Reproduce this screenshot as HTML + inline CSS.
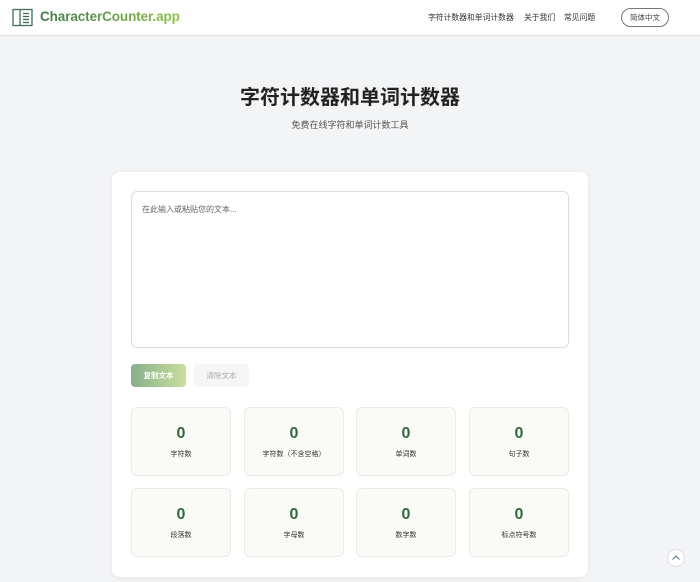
<!DOCTYPE html>
<html><head><meta charset="utf-8"><style>
*{box-sizing:border-box;margin:0;padding:0}
body{width:700px;height:582px;overflow:hidden;background:#f3f4f6;font-family:"Liberation Sans","Noto Sans CJK SC",sans-serif;color:#333;position:relative}
.hdr{position:absolute;left:0;top:0;width:700px;height:36px;background:#fff;border-bottom:1px solid #e2e4e7}
.logo{position:absolute;left:40px;top:9px;font-size:13.5px;font-weight:bold;background:linear-gradient(90deg,#3e7a4c,#8cc63f);-webkit-background-clip:text;background-clip:text;color:transparent;letter-spacing:-0.1px}
.nav{position:absolute;top:12px;font-size:7.8px;color:#333}
.lang{position:absolute;left:621px;top:8px;width:48px;height:19px;border:1px solid #777;border-radius:10px;font-size:7.5px;text-align:center;line-height:17px;color:#444}
h1{position:absolute;left:0;width:700px;top:81px;text-align:center;font-size:20px;font-weight:bold;color:#222}
.sub{position:absolute;left:0;width:700px;top:118px;text-align:center;font-size:9px;color:#555}
.card{position:absolute;left:112px;top:172px;width:476px;height:405px;background:#fff;border-radius:8px;box-shadow:0 1px 4px rgba(0,0,0,.06)}
.ta{position:absolute;left:19px;top:19px;width:438px;height:157px;border:1px solid #ddd;border-radius:6px;font-size:8px;color:#666;padding:12px 10px}
.b1{position:absolute;left:19px;top:192px;width:55px;height:23px;border-radius:4px;background:linear-gradient(90deg,#86b08c,#c9df9c);color:#fff;font-size:7.5px;font-weight:bold;text-align:center;line-height:23px}
.b2{position:absolute;left:82px;top:192px;width:55px;height:23px;border-radius:4px;background:#f5f6f7;color:#aaa;font-size:7.5px;text-align:center;line-height:23px}
.st{position:absolute;width:100px;height:69px;background:#fafbf6;border:1px solid #e9ebe5;border-radius:6px;text-align:center}
.st b{display:block;margin-top:17px;font-size:16px;color:#2f6b3d;line-height:18px}
.st span{display:block;margin-top:6px;font-size:7px;color:#333}
.up{position:absolute;left:667px;top:549px;width:18px;height:18px;border-radius:50%;background:#fff;border:1px solid #dde}
</style></head><body>
<div class="hdr">
<svg style="position:absolute;left:12px;top:8px" width="21" height="19" viewBox="0 0 21 19" fill="none" stroke="#3e6f56" stroke-width="1.3"><rect x="1" y="1.5" width="19" height="16"/><line x1="8" y1="1.5" x2="8" y2="17.5"/><line x1="11" y1="5.5" x2="17" y2="5.5"/><line x1="11" y1="8.5" x2="17" y2="8.5"/><line x1="11" y1="11.5" x2="17" y2="11.5"/><line x1="11" y1="14.5" x2="17" y2="14.5"/></svg>
<div class="logo">CharacterCounter.app</div>
<div class="nav" style="left:428px">字符计数器和单词计数器</div>
<div class="nav" style="left:524px">关于我们</div>
<div class="nav" style="left:564px">常见问题</div>
<div class="lang">简体中文</div>
</div>
<h1>字符计数器和单词计数器</h1>
<div class="sub">免费在线字符和单词计数工具</div>
<div class="card">
<div class="ta">在此输入或粘贴您的文本...</div>
<div class="b1">复制文本</div>
<div class="b2">清除文本</div>
<div class="st" style="left:19px;top:235px"><b>0</b><span>字符数</span></div>
<div class="st" style="left:132px;top:235px"><b>0</b><span>字符数（不含空格）</span></div>
<div class="st" style="left:244px;top:235px"><b>0</b><span>单词数</span></div>
<div class="st" style="left:357px;top:235px"><b>0</b><span>句子数</span></div>
<div class="st" style="left:19px;top:316px"><b>0</b><span>段落数</span></div>
<div class="st" style="left:132px;top:316px"><b>0</b><span>字母数</span></div>
<div class="st" style="left:244px;top:316px"><b>0</b><span>数字数</span></div>
<div class="st" style="left:357px;top:316px"><b>0</b><span>标点符号数</span></div>
</div>
<div class="up"><svg width="16" height="16" viewBox="0 0 16 16" fill="none" stroke="#5a7d9a" stroke-width="1.2"><path d="M4.5 9.5 8 6l3.5 3.5"/></svg></div>
</body></html>
